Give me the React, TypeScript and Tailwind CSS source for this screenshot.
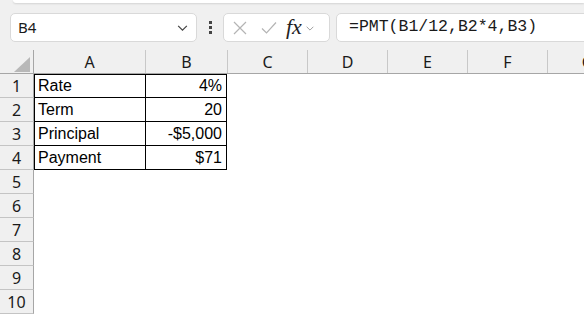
import React from "react";

const cols = [
  { label: "A", w: "w-[112px]" },
  { label: "B", w: "w-[82px]" },
  { label: "C", w: "w-[80px]" },
  { label: "D", w: "w-[80px]" },
  { label: "E", w: "w-[80px]" },
  { label: "F", w: "w-[80px]" },
  { label: "G", w: "w-[80px]" },
];

const data = [
  ["Rate", "4%"],
  ["Term", "20"],
  ["Principal", "-$5,000"],
  ["Payment", "$71"],
];

const ui = { fontFamily: '"Noto Sans", "Open Sans", sans-serif' };
const cell = { fontFamily: '"Liberation Sans", Arial, sans-serif' };

function Chevron({ size = 12, color = "#555" }: { size?: number; color?: string }) {
  return (
    <svg width={size} height={size} viewBox="0 0 12 12" fill="none">
      <path d="M2 4.5 L6 8.5 L10 4.5" stroke={color} strokeWidth="1.1" />
    </svg>
  );
}

export default function App() {
  return (
    <div className="w-[584px] h-[319px] overflow-hidden bg-[#f0f0f0] flex flex-col">
      {/* ribbon edge */}
      <div className="h-[3px] ml-[13px] bg-white rounded-bl-[4px] shadow-[0_1px_2px_rgba(0,0,0,0.12)]" />

      {/* formula bar */}
      <div className="h-[47px] flex items-start pt-[10px] pl-[10px]">
        <div className="w-[187px] h-[29px] bg-white border border-[#d9d9d9] rounded-[5px] flex items-center justify-between pl-[7px] pr-[7px]" style={ui}>
          <span className="text-[15px] text-[#1a1a1a] leading-none">B4</span>
          <Chevron size={13} color="#444" />
        </div>
        <div className="w-[26px] h-[29px] flex flex-col items-center justify-center gap-[2px]">
          <span className="w-[3px] h-[3px] bg-[#444]" />
          <span className="w-[3px] h-[3px] bg-[#444]" />
          <span className="w-[3px] h-[3px] bg-[#444]" />
        </div>
        <div className="w-[107px] h-[29px] bg-white border border-[#d9d9d9] rounded-[5px] flex items-center pl-[8px]">
          <svg width="14" height="14" viewBox="0 0 14 14" className="ml-[1px]">
            <path d="M1 1 L13 13 M13 1 L1 13" stroke="#b4b4b4" strokeWidth="1.2" />
          </svg>
          <svg width="16" height="14" viewBox="0 0 16 14" className="ml-[14px]">
            <path d="M1 7.5 L5.5 12 L15 1.5" stroke="#b4b4b4" strokeWidth="1.2" fill="none" />
          </svg>
          <span
            className="ml-[9px] text-[22px] italic text-[#222] leading-none pb-[2px]"
            style={{ fontFamily: '"Liberation Serif", "Times New Roman", serif' }}
          >
            fx
          </span>
          <span className="ml-[3px] flex items-center">
            <Chevron size={10} color="#999" />
          </span>
        </div>
        <div className="flex-1 h-[29px] ml-[6px] -mr-[10px] bg-white border border-[#d9d9d9] rounded-[5px] flex items-center pl-[12px]">
          <span
            className="text-[16.5px] text-[#1a1a1a] leading-none"
            style={{ fontFamily: '"Liberation Mono", "DejaVu Sans Mono", monospace' }}
          >
            =PMT(B1/12,B2*4,B3)
          </span>
        </div>
      </div>

      {/* grid */}
      <div className="flex-1 bg-white flex flex-col">
        {/* column headers */}
        <div className="flex h-[24px] bg-[#f0f0f0] border-b border-[#a6a6a6]" style={ui}>
          <div className="w-[34px] shrink-0 border-r border-[#a6a6a6] flex items-end justify-end pr-[3px] pb-[1px]">
            <svg width="16" height="15" viewBox="0 0 16 15">
              <path d="M16 0 L16 15 L0 15 Z" fill="#b8b8b8" />
            </svg>
          </div>
          {cols.map((c) => (
            <div
              key={c.label}
              className={`${c.w} shrink-0 border-r border-[#c8c8c8] flex items-center justify-center text-[16px] text-[#1a1a1a]`}
            >
              {c.label}
            </div>
          ))}
        </div>

        {/* rows */}
        {Array.from({ length: 10 }).map((_, i) => {
          const row = data[i];
          return (
            <div key={i} className="flex h-[24px] shrink-0">
              <div
                className="w-[34px] shrink-0 bg-[#f0f0f0] border-r border-b border-r-[#a6a6a6] border-b-[#c4c4c4] flex items-center justify-center text-[16px] text-[#1a1a1a]"
                style={ui}
              >
                {i + 1}
              </div>
              {row ? (
                <>
                  <div
                    className={`w-[112px] shrink-0 border-l border-r border-b border-black ${i === 0 ? "border-t" : ""} flex items-center pl-[3px] text-[16px] text-black`}
                    style={cell}
                  >
                    {row[0]}
                  </div>
                  <div
                    className={`w-[82px] -ml-px shrink-0 border-r border-b border-black ${i === 0 ? "border-t" : ""} flex items-center justify-end pr-[4px] text-[16px] text-black`}
                    style={cell}
                  >
                    {row[1]}
                  </div>
                </>
              ) : null}
            </div>
          );
        })}
      </div>
    </div>
  );
}
